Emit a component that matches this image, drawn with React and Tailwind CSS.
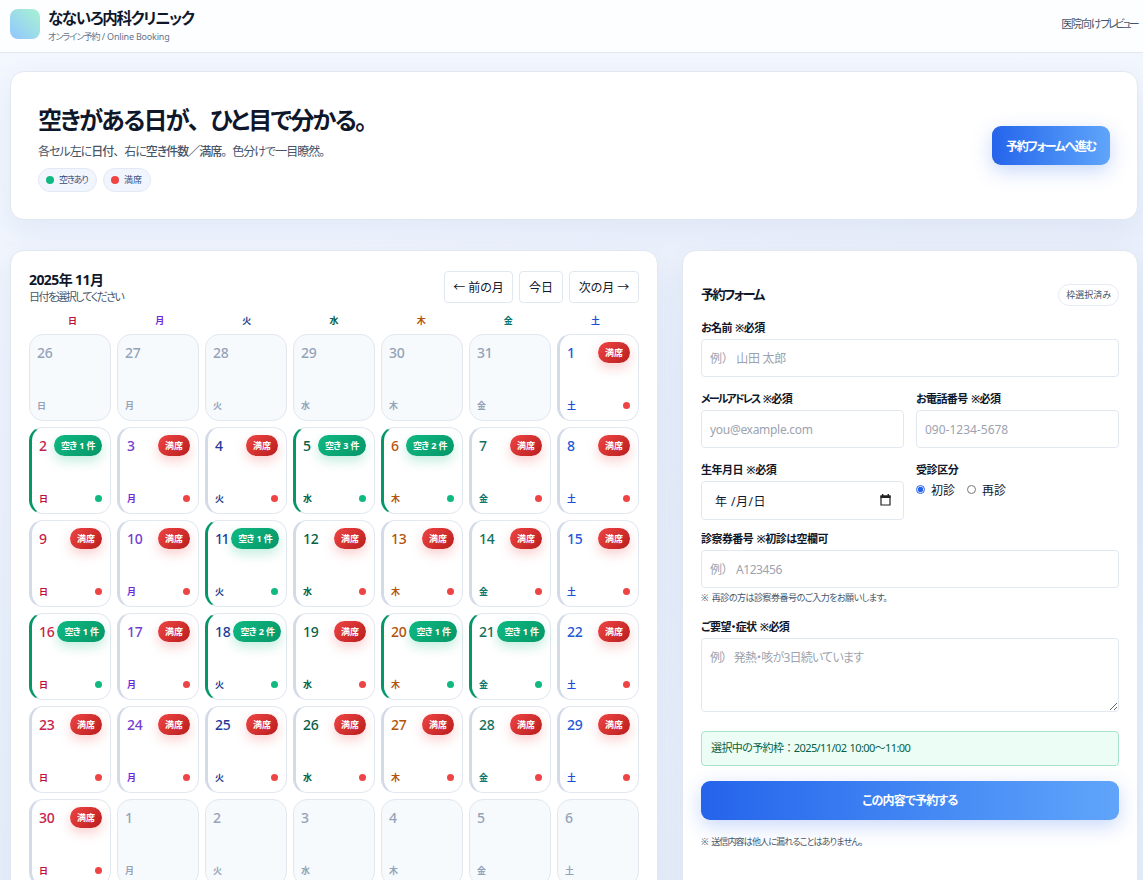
import React, { useState } from "react";
import clsx from "clsx";

const DAYS = [
  { label: "日", head: "text-[#be123c]", num: "text-[#c81e4a]" },
  { label: "月", head: "text-[#6d28d9]", num: "text-[#7440d0]" },
  { label: "火", head: "text-[#1e3a8a]", num: "text-[#1e3a9a]" },
  { label: "水", head: "text-[#065f46]", num: "text-[#065f46]" },
  { label: "木", head: "text-[#b45309]", num: "text-[#b45309]" },
  { label: "金", head: "text-[#0f766e]", num: "text-[#13705c]" },
  { label: "土", head: "text-[#1d4ed8]", num: "text-[#2458d8]" },
];

// open slots by day of month, every other day is full
const OPEN = { 2: 1, 5: 3, 6: 2, 11: 1, 16: 1, 18: 2, 20: 1, 21: 1 };

const CELLS = Array.from({ length: 42 }, (_, i) => {
  const day = i - 5;
  if (day < 1) return { key: i, day: day + 31, outside: true };
  if (day > 30) return { key: i, day: day - 30, outside: true };
  return { key: i, day, outside: false };
});

function DayCell({ cell, weekday }) {
  const open = cell.outside ? 0 : OPEN[cell.day] || 0;

  return (
    <button
      className={clsx(
        "flex h-[87px] w-[82px] flex-col justify-between rounded-[14px] border border-[#e2e8f0] text-left",
        cell.outside && "bg-[#f7fafd] pl-[7px] pr-2 text-[#94a3b8]",
        !cell.outside && "border-l-[3px] bg-white pl-[7px] pr-2",
        !cell.outside && (open ? "border-l-[#059669]" : "border-l-[#d3dae8]")
      )}
    >
      <div className="mt-[7px] flex h-[21px] items-center justify-between gap-[3px]">
        <span
          className={clsx(
            "text-[14px] font-[550] leading-none",
            cell.day === 11 ? "tracking-[-1.4px]" : "tracking-[-0.3px]",
            !cell.outside && DAYS[weekday].num
          )}
        >
          {cell.day}
        </span>
        {!cell.outside && (
          <span
            className={clsx(
              "flex h-[21px] shrink-0 items-center whitespace-nowrap rounded-full px-[7px] text-[9px] font-bold text-white",
              open
                ? "bg-linear-135 from-[#10b981] to-[#059669] tracking-[-0.6px] [word-spacing:1px] shadow-[0_5px_12px_rgba(16,185,129,0.25)]"
                : "bg-linear-135 from-[#ef4444] to-[#b91c1c] shadow-[0_5px_12px_rgba(239,68,68,0.25)]"
            )}
          >
            {open ? `空き ${open} 件` : "満席"}
          </span>
        )}
      </div>
      <div className="mb-[8px] flex h-[14px] items-center justify-between">
        <span className={clsx("text-[9px] font-semibold leading-none", !cell.outside && DAYS[weekday].head)}>
          {DAYS[weekday].label}
        </span>
        {!cell.outside && (
          <span className={clsx("h-[7px] w-[7px] rounded-full", open ? "bg-[#10b981]" : "bg-[#ef4444]")} />
        )}
      </div>
    </button>
  );
}

function Label({ children, className = "tracking-[-0.6px]" }) {
  return (
    <div
      className={clsx(
        "mb-[3px] h-4 text-[11px] font-semibold leading-4 text-[#0f172a] [word-spacing:1px]",
        className
      )}
    >
      {children}
    </div>
  );
}

const INPUT =
  "block h-[38px] w-full rounded border border-[#e2e8f0] bg-white px-[8px] text-[12px] text-[#0f172a] outline-none [font-feature-settings:normal] placeholder:text-[#9ca3af]";

function BookingForm() {
  const [visit, setVisit] = useState("first");

  return (
    <section className="w-[456px] rounded-[14px] border border-[#e2e8f0] bg-white px-[18px] shadow-[0_10px_30px_rgba(30,64,175,0.07)]">
      <div className="mt-[33px] flex h-[22px] items-center justify-between">
        <h3 className="text-[13px] font-bold tracking-[-1.6px]">予約フォーム</h3>
        <span className="flex h-[22px] items-center rounded-full border border-[#e5eaf6] px-[7px] text-[9px] text-[#475569]">
          枠選択済み
        </span>
      </div>

      <div className="mt-[14px]">
        <Label>お名前 ※必須</Label>
        <input className={clsx(INPUT, "tracking-[-0.3px]")} placeholder="例） 山田 太郎" />
      </div>

      <div className="mt-[14px] grid grid-cols-2 gap-x-3">
        <div>
          <Label>
            <span className="tracking-[-1.9px]">メールアドレス</span> ※必須
          </Label>
          <input className={clsx(INPUT, "tracking-[-0.3px]")} placeholder="you@example.com" />
        </div>
        <div>
          <Label>お電話番号 ※必須</Label>
          <input className={INPUT} placeholder="090-1234-5678" />
        </div>
      </div>

      <div className="mt-[14px] grid grid-cols-2 gap-x-3">
        <div>
          <Label className="tracking-[-0.5px]">生年月日 ※必須</Label>
          <div className="flex h-[39px] items-center justify-between rounded border border-[#e2e8f0] bg-white pl-[13px] pr-3 text-[12px]">
            <span className="mt-[3px] tracking-[0.5px]">年 /月/日</span>
            <svg className="mb-[2px]" width="11" height="12" viewBox="0 0 11 12" fill="none">
              <path d="M1 2h9v9H1z" stroke="#222" strokeWidth="1.2" />
              <path d="M.5 1.5h10v2.6H.5zM2 0h1.4v2H2zM7.6 0H9v2H7.6z" fill="#222" />
            </svg>
          </div>
        </div>
        <div>
          <Label className="tracking-[-0.4px]">受診区分</Label>
          <div className="flex h-[18px] items-center text-[12px] leading-none">
            {[
              ["first", "初診"],
              ["again", "再診"],
            ].map(([id, text]) => (
              <label key={id} className="mr-3 flex items-center gap-[6px]">
                <input
                  type="radio"
                  name="visit"
                  className="mb-[2px] h-[9px] w-[9px] accent-[#2563eb]"
                  checked={visit === id}
                  onChange={() => setVisit(id)}
                />
                <span className="mt-[2px]">{text}</span>
              </label>
            ))}
          </div>
        </div>
      </div>

      <div className="mt-[11px]">
        <Label className="tracking-[-0.55px]">診察券番号 ※初診は空欄可</Label>
        <input className={clsx(INPUT, "tracking-[-0.4px]")} placeholder="例） A123456" />
        <p className="mt-[3px] h-[14px] text-[9px] leading-[14px] tracking-[-0.5px] text-[#475569] [word-spacing:2px]">
          ※ 再診の方は診察券番号のご入力をお願いします。
        </p>
      </div>

      <div className="mt-[14px]">
        <Label className="tracking-[-0.6px]">ご要望・症状 ※必須</Label>
        <textarea
          className="block h-[74px] w-full resize rounded border border-[#e2e8f0] bg-white px-[8px] py-[10px] text-[12px] leading-[18px] tracking-[-0.8px] outline-none [word-spacing:5px] placeholder:text-[#9ca3af]"
          placeholder="例） 発熱・咳が3日続いています"
        />
      </div>

      <div className="mt-[19px] flex h-[35px] items-center rounded border border-[#a7e3cc] bg-[#ecfdf5] px-[9px] text-[11px] text-[#065f46]">
        <span className="tracking-[-0.6px] [word-spacing:1px]">
          選択中の予約枠<span className="[font-feature-settings:normal]">：</span>2025/11/02 10:00〜11:00
        </span>
      </div>
      <button className="mt-[15px] block h-[39px] w-full rounded-[9px] bg-linear-to-r from-[#2563eb] to-[#60a5fa] text-[12px] font-bold tracking-[-0.8px] text-white shadow-[0_6px_20px_rgba(37,99,235,0.25)]">
        この内容で予約する
      </button>
      <p className="mt-[15px] text-[9px] leading-[14px] tracking-[-0.85px] text-[#475569] [word-spacing:2px]">
        ※ 送信内容は他人に漏れることはありません。
      </p>
    </section>
  );
}

export default function App() {
  return (
    <div className="h-screen overflow-hidden bg-[radial-gradient(ellipse_at_right,#e3eaf8_0%,transparent_60%),linear-gradient(#f3f7fe,#e8effa)] font-['Noto_Sans','Noto_Sans_CJK_JP',sans-serif] text-[#0f172a] [font-feature-settings:'palt']">
      <header className="flex h-[53px] items-center justify-between border-b border-[#e2e8f0] bg-white/85 pl-[10px] pr-[5px]">
        <div className="flex items-center gap-[8px]">
          <div className="mb-[4px] h-[30px] w-[30px] rounded-[8px] bg-linear-to-tr from-[#93c5fd] to-[#a7f3d0]" />
          <div>
            <div className="h-[21px] text-[15.5px] font-bold leading-[20px] tracking-[-1.3px]">なないろ内科クリニック</div>
            <div className="h-[16px] text-[9px] leading-[16px] text-[#64748b]">
              <span className="tracking-[-0.9px]">オンライン予約</span>
              <span className="tracking-[-0.2px]"> / Online Booking</span>
            </div>
          </div>
        </div>
        <span className="mb-[3px] flex whitespace-nowrap text-[11px] text-[#475569]">
          <span className="tracking-[-1.1px]">医院向け</span>
          <span className="mr-px tracking-[-2.7px]">プレビュー</span>
        </span>
      </header>

      <main className="pl-[10px] pr-[5px] pt-[18px]">
        <section className="flex h-[149px] items-center justify-between rounded-[14px] border border-[#e2e8f0] bg-white pl-[27px] pr-[27px] shadow-[0_10px_30px_rgba(30,64,175,0.07)]">
          <div className="mt-[3px]">
            <h1 className="h-[34px] text-[24px] font-bold leading-[33px] tracking-[-1.8px]">
              空きがある日が<span className="[font-feature-settings:normal]">、</span>ひと目で分かる。
            </h1>
            <p className="mt-[6px] h-[18px] text-[12px] leading-[18px] tracking-[-1px] text-[#475569]">
              各セル左に<b className="font-medium">日付</b>
              <span className="[font-feature-settings:normal]">、</span>右に
              <b className="font-medium">空き件数／満席</b>
              <span className="[font-feature-settings:normal]">。</span>色分けで一目瞭然。
            </p>
            <div className="mt-[7px] flex gap-[6px] text-[9px] text-[#334e80]">
              <span className="flex h-6 w-[59px] items-center gap-[5px] rounded-full border border-[#e2e8f6] bg-[#f1f5fe] px-[7px]">
                <i className="h-2 w-2 shrink-0 rounded-full bg-[#10b981]" />
                <span className="whitespace-nowrap tracking-[-1.1px]">空きあり</span>
              </span>
              <span className="flex h-6 w-[48px] items-center gap-[5px] rounded-full border border-[#e2e8f6] bg-[#f1f5fe] px-[7px]">
                <i className="h-2 w-2 shrink-0 rounded-full bg-[#ef4444]" />
                満席
              </span>
            </div>
          </div>
          <button className="h-[39px] w-[118px] rounded-[9px] bg-linear-to-r from-[#2563eb] to-[#60a5fa] pt-[2px] text-[12px] font-bold tracking-[-1.4px] text-white shadow-[0_6px_20px_rgba(37,99,235,0.25)]">
            予約フォームへ進む
          </button>
        </section>

        <div className="mt-[30px] flex gap-6">
          <section className="w-[648px] rounded-[14px] border border-[#e2e8f0] bg-white px-[18px] pb-[18px] pt-[18px] shadow-[0_10px_30px_rgba(30,64,175,0.07)]">
            <div className="flex h-[37px] items-start justify-between">
              <div>
                <h2 className="h-[20px] text-[14px] font-bold leading-[21px] tracking-[-0.6px]">2025年 11月</h2>
                <p className="h-[16px] text-[11px] leading-[16px] tracking-[-1.6px] text-[#475569]">日付を選択してください</p>
              </div>
              <div className="mt-[2px] flex gap-[6px] text-[12px]">
                <button className="h-8 w-[69px] rounded border border-[#e2e8f0] bg-white pt-[2px]">← 前の月</button>
                <button className="h-8 w-[44px] rounded border border-[#e2e8f0] bg-white pt-[2px]">今日</button>
                <button className="h-8 w-[70px] rounded border border-[#e2e8f0] bg-white pt-[2px]">次の月 →</button>
              </div>
            </div>

            <div className="mt-[8px] grid h-[14px] grid-cols-7 text-center text-[9px] font-semibold leading-[14px]">
              {DAYS.map((d) => (
                <span key={d.label} className={d.head}>
                  {d.label}
                </span>
              ))}
            </div>

            <div className="mt-[6px] grid grid-cols-7 gap-[6px]">
              {CELLS.map((cell, i) => (
                <DayCell key={cell.key} cell={cell} weekday={i % 7} />
              ))}
            </div>
          </section>

          <BookingForm />
        </div>
      </main>
    </div>
  );
}
